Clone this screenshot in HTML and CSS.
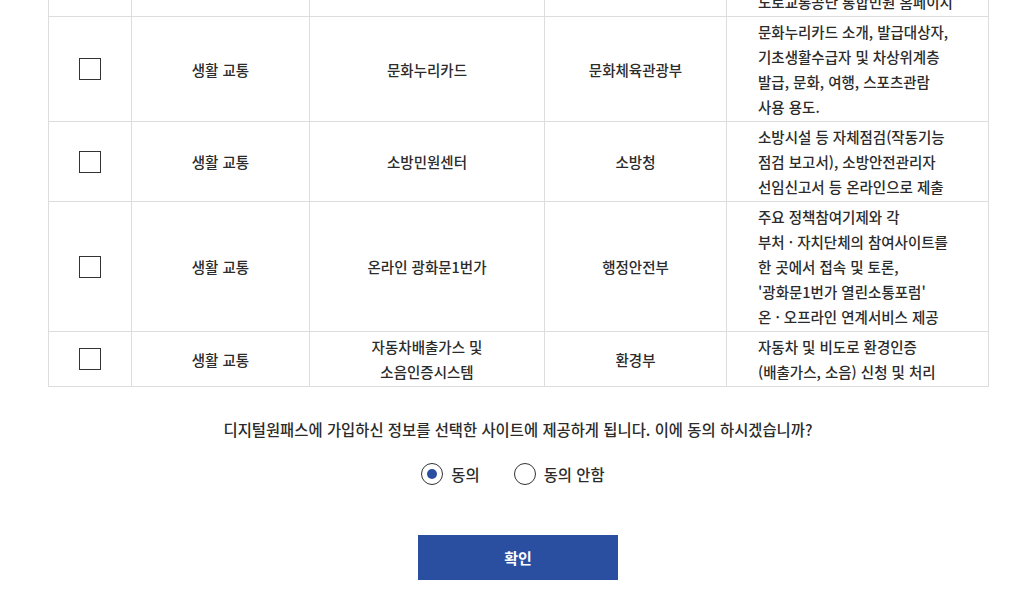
FILE: index.html
```html
<!DOCTYPE html>
<html lang="ko">
<head>
<meta charset="utf-8">
<title>디지털원패스 정보제공 동의</title>
<link rel="stylesheet" href="styles.css">
</head>
<body>
<div class="page">
  <div class="table-wrap">
    <table class="svc-table">
      <colgroup>
        <col class="c-check"><col class="c-cat"><col class="c-name"><col class="c-org"><col class="c-desc">
      </colgroup>
      <tbody>
        <tr class="row-partial">
          <td class="cell-check"></td>
          <td></td>
          <td></td>
          <td></td>
          <td class="desc">도로교통공단 통합민원 홈페이지</td>
        </tr>
        <tr>
          <td class="cell-check"><input type="checkbox" class="chk" aria-label="선택"></td>
          <td>생활 교통</td>
          <td>문화누리카드</td>
          <td>문화체육관광부</td>
          <td class="desc">문화누리카드 소개, 발급대상자,<br>기초생활수급자 및 차상위계층<br>발급, 문화, 여행, 스포츠관람<br>사용 용도.</td>
        </tr>
        <tr>
          <td class="cell-check"><input type="checkbox" class="chk" aria-label="선택"></td>
          <td>생활 교통</td>
          <td>소방민원센터</td>
          <td>소방청</td>
          <td class="desc">소방시설 등 자체점검(작동기능<br>점검 보고서), 소방안전관리자<br>선임신고서 등 온라인으로 제출</td>
        </tr>
        <tr>
          <td class="cell-check"><input type="checkbox" class="chk" aria-label="선택"></td>
          <td>생활 교통</td>
          <td>온라인 광화문1번가</td>
          <td>행정안전부</td>
          <td class="desc">주요 정책참여기제와 각<br>부처 · 자치단체의 참여사이트를<br>한 곳에서 접속 및 토론,<br>'광화문1번가 열린소통포럼'<br>온 · 오프라인 연계서비스 제공</td>
        </tr>
        <tr>
          <td class="cell-check"><input type="checkbox" class="chk" aria-label="선택"></td>
          <td>생활 교통</td>
          <td>자동차배출가스 및<br>소음인증시스템</td>
          <td>환경부</td>
          <td class="desc">자동차 및 비도로 환경인증<br>(배출가스, 소음) 신청 및 처리</td>
        </tr>
      </tbody>
    </table>
  </div>

  <div class="consent">
    <p class="question">디지털원패스에 가입하신 정보를 선택한 사이트에 제공하게 됩니다. 이에 동의 하시겠습니까?</p>
    <div class="radios">
      <label class="radio"><input type="radio" name="agree" checked><span>동의</span></label>
      <label class="radio"><input type="radio" name="agree"><span>동의 안함</span></label>
    </div>
    <button class="confirm" type="button">확인</button>
  </div>
</div>
</body>
</html>
```

FILE: styles.css
```css
html, body {
  margin: 0;
  padding: 0;
  background: #fff;
}
body {
  font-family: "Noto Sans CJK KR", "Noto Sans", sans-serif;
  color: #333;
  overflow: hidden;
}
.page {
  width: 940px;
  margin-left: 48px;
}
.table-wrap {
  margin-top: -13px;
}
.svc-table {
  width: 940px;
  border-collapse: collapse;
  table-layout: fixed;
  font-size: 14.5px;
  font-weight: 500;
  line-height: 25px;
  color: #2b2b2b;
}
.c-check { width: 83px; }
.c-cat { width: 178px; }
.c-name { width: 235px; }
.c-org { width: 182px; }
.c-desc { width: 262px; }
.svc-table td {
  border: 1px solid #dddddd;
  padding: 2px 10px;
  text-align: center;
  vertical-align: middle;
}
.svc-table tr.row-partial td {
  border-top: 0;
}
.svc-table td.desc {
  text-align: left;
  padding-left: 31px;
  padding-right: 4px;
  white-space: nowrap;
}
.cell-check {
  line-height: 0;
}
.chk {
  appearance: none;
  -webkit-appearance: none;
  width: 22px;
  height: 22px;
  margin: 0;
  border: 1px solid #333;
  background: #fff;
  vertical-align: middle;
}
.consent {
  display: flex;
  flex-direction: column;
  align-items: center;
}
.question {
  margin: 30px 0 0;
  font-size: 15.4px;
  font-weight: 500;
  line-height: 24px;
  color: #2b2b2b;
}
.radios {
  display: flex;
  gap: 34px;
  margin-top: 22px;
  margin-right: 10px;
}
.radio {
  display: flex;
  align-items: center;
  gap: 8px;
  font-size: 15.4px;
  font-weight: 500;
  line-height: 22px;
  color: #2b2b2b;
}
.radio input {
  appearance: none;
  -webkit-appearance: none;
  width: 22px;
  height: 22px;
  margin: 0;
  border: 1px solid #333;
  border-radius: 50%;
  background: #fff;
  display: grid;
  place-items: center;
}
.radio input:checked::after {
  content: "";
  width: 10px;
  height: 10px;
  border-radius: 50%;
  background: #2b4fa0;
}
.confirm {
  margin-top: 50px;
  width: 200px;
  height: 45px;
  border: 0;
  background: #2a4fa0;
  color: #fff;
  font-family: "Noto Sans CJK KR", "Noto Sans", sans-serif;
  font-size: 15px;
  font-weight: 700;
}
```
